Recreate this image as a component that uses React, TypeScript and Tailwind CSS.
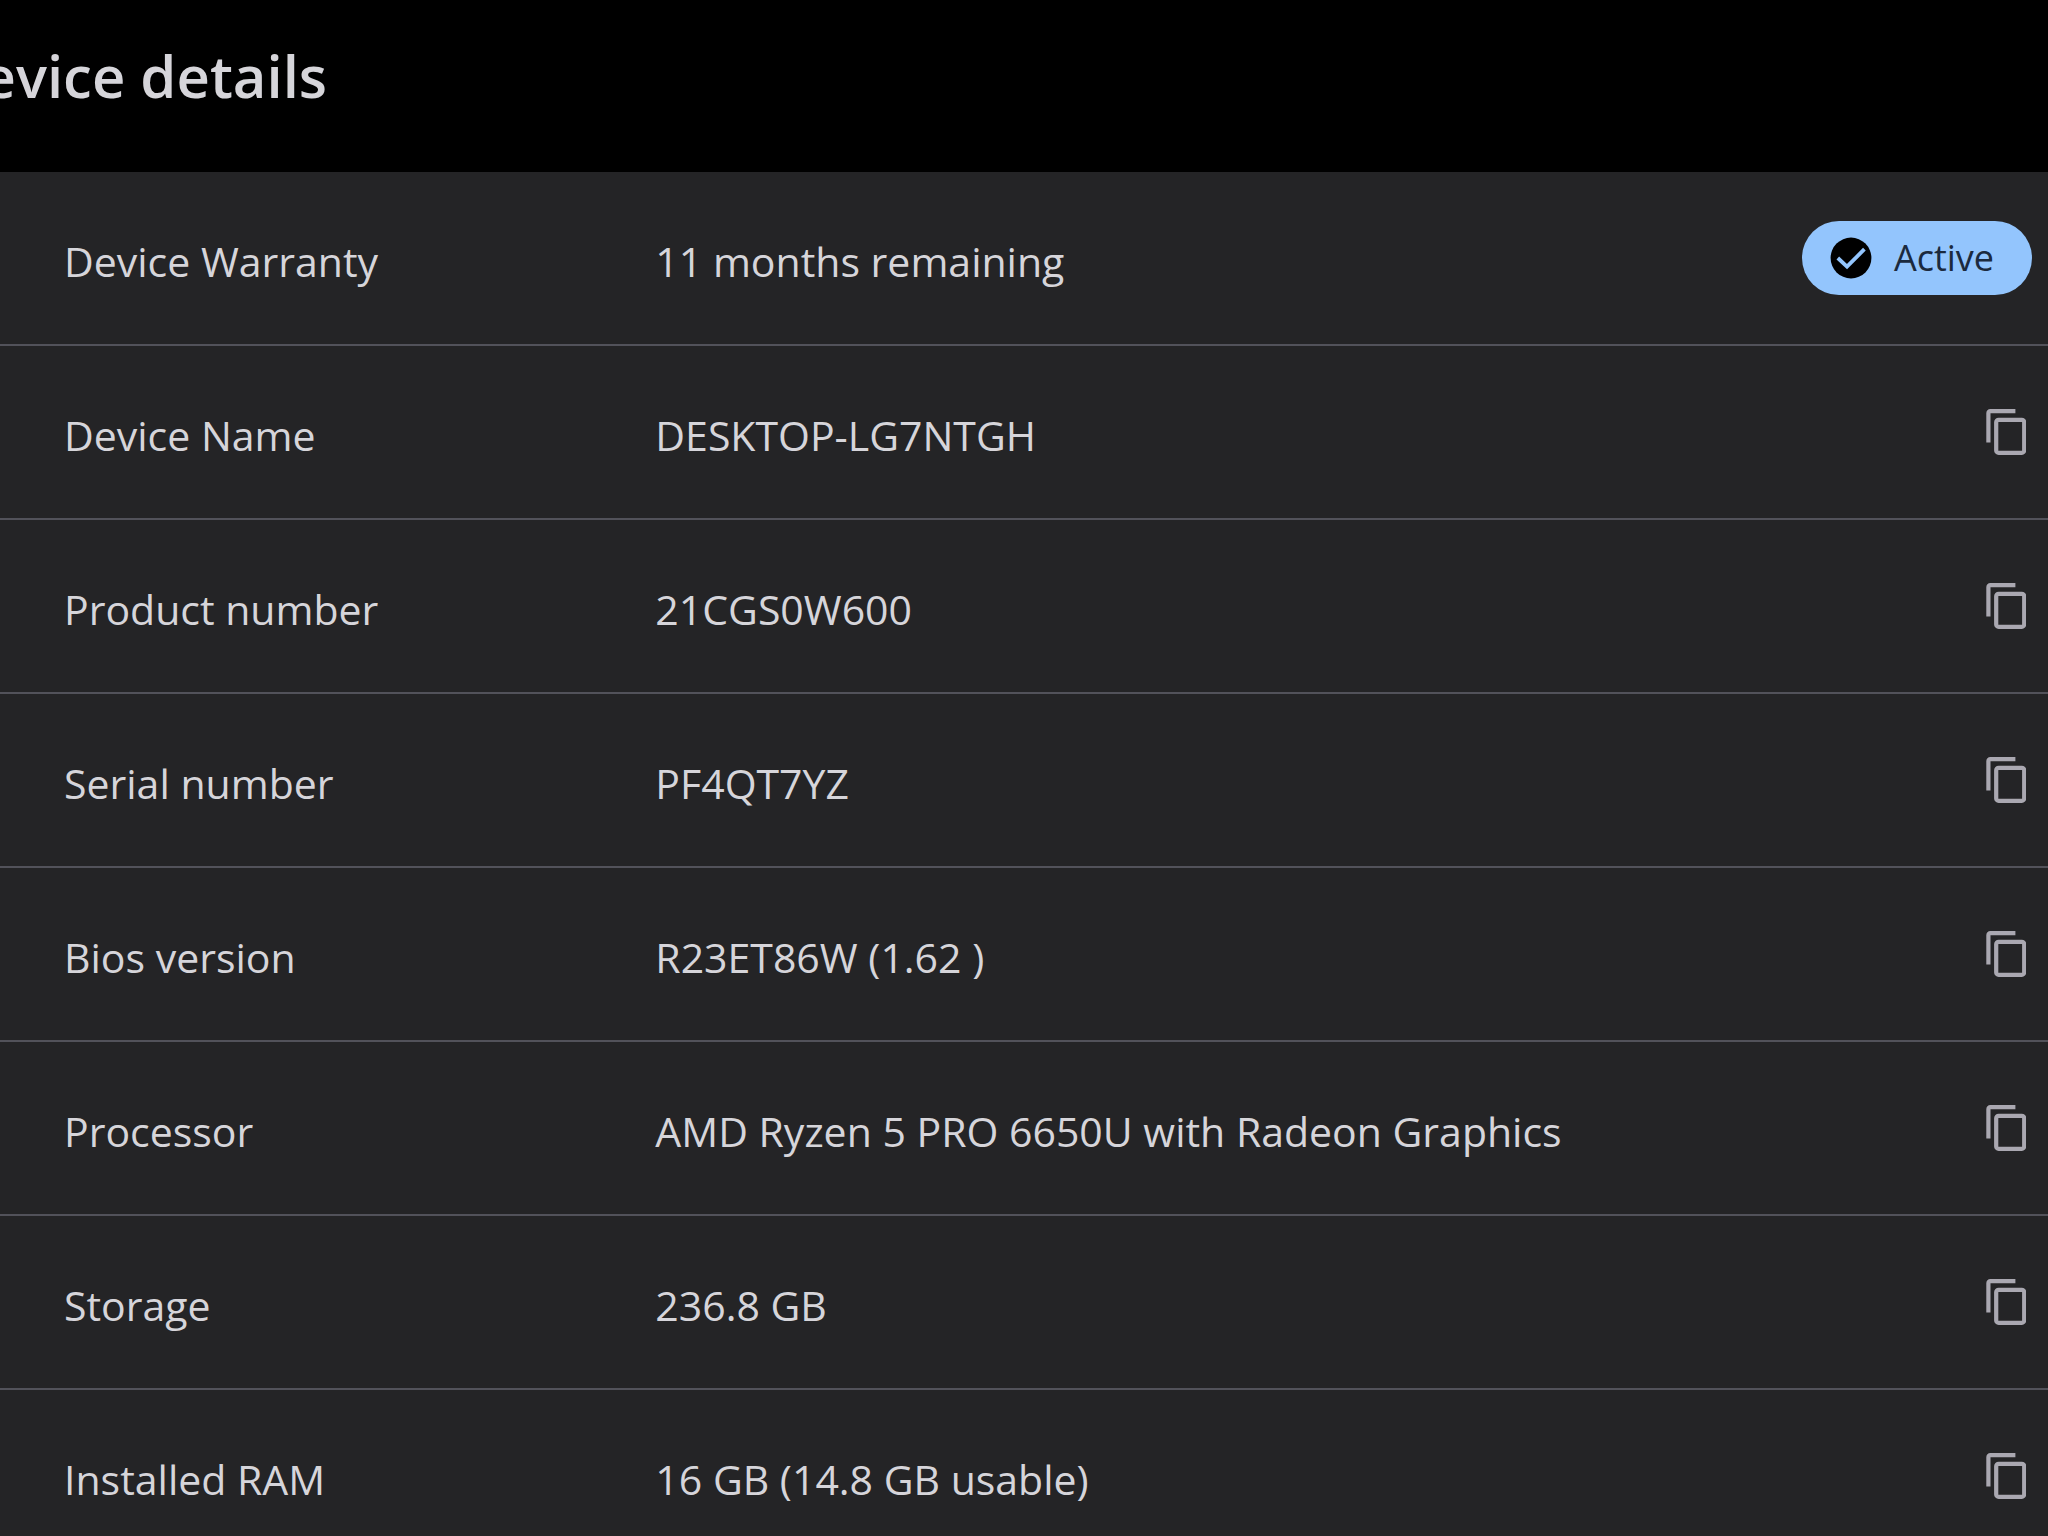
type Detail = { label: string; value: string; status?: string };

const details: Detail[] = [
  { label: "Device Warranty", value: "11 months remaining", status: "Active" },
  { label: "Device Name", value: "DESKTOP-LG7NTGH" },
  { label: "Product number", value: "21CGS0W600" },
  { label: "Serial number", value: "PF4QT7YZ" },
  { label: "Bios version", value: "R23ET86W (1.62 )" },
  { label: "Processor", value: "AMD Ryzen 5 PRO 6650U with Radeon Graphics" },
  { label: "Storage", value: "236.8 GB" },
  { label: "Installed RAM", value: "16 GB (14.8 GB usable)" },
];

function CopyIcon() {
  return (
    <svg width="40" height="46" viewBox="0 0 40 46" fill="none" stroke="#aaa8b1" strokeWidth="4.2" aria-hidden="true">
      <path d="M2.4 33.6V4.2Q2.4 2.2 4.4 2.2H29.4" />
      <rect x="10.2" y="10.8" width="28" height="33" rx="2.4" />
    </svg>
  );
}

function CheckIcon() {
  return (
    <svg width="42" height="42" viewBox="0 0 42 42" fill="none" aria-hidden="true">
      <circle cx="21" cy="21" r="20.4" fill="#000" />
      <path d="M7.8 21L17 29.6L34.4 12.2" stroke="#93c5fd" strokeWidth="3.8" />
    </svg>
  );
}

function StatusBadge({ text }: { text: string }) {
  return (
    <span className="inline-flex h-[74px] items-center gap-[22px] rounded-full bg-[#93c5fd] pr-[38px] pl-7 text-[36px] leading-none text-[#1b2a3e]">
      <CheckIcon />
      {text}
    </span>
  );
}

export default function App() {
  return (
    <main className="h-screen overflow-hidden bg-[#242426] font-['Open_Sans','Noto_Sans',sans-serif] text-[#d6d5da]">
      <header className="flex h-[172px] items-start bg-black pt-11">
        <h1 className="-ml-[60px] text-[58px] leading-[64px] font-semibold whitespace-nowrap">Device details</h1>
      </header>
      <table className="w-full table-fixed border-separate border-spacing-0 text-[41px] leading-[56px] [&_td]:border-b-2 [&_td]:border-[#52525a] [&_th]:border-b-2 [&_th]:border-[#52525a]">
        <colgroup>
          <col className="w-[32%]" />
          <col />
          <col className="w-[262px]" />
        </colgroup>
        <tbody>
          {details.map((d) => (
            <tr key={d.label} className="h-[174px]">
              <th scope="row" className="pt-1.5 pl-16 text-left font-normal whitespace-nowrap">
                {d.label}
              </th>
              <td className="pt-1.5 whitespace-nowrap">{d.value}</td>
              <td className="pr-4">
                <div className="flex justify-end">
                  {d.status ? (
                    <StatusBadge text={d.status} />
                  ) : (
                    <button type="button" aria-label={`Copy ${d.label}`} className="cursor-pointer p-1.5">
                      <CopyIcon />
                    </button>
                  )}
                </div>
              </td>
            </tr>
          ))}
        </tbody>
      </table>
    </main>
  );
}
